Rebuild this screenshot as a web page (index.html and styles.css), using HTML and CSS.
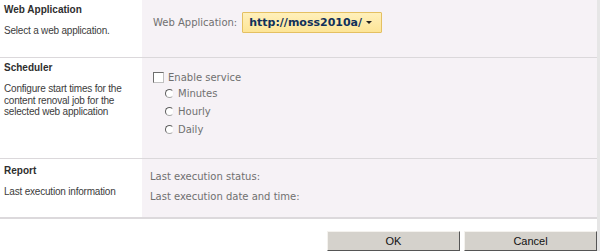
FILE: index.html
```html
<!DOCTYPE html>
<html lang="en">
<head>
    <title>Content Removal Settings</title>
    <link rel="stylesheet" href="styles.css">
</head>
<body>
<div class="page">

    <div class="section section-webapp">
        <div class="section-info">
            <div class="section-title">Web Application</div>
            <div class="section-desc">Select a web application.</div>
        </div>
        <div class="section-controls">
            <div class="webapp-row">
                <span class="field-label">Web Application:</span>
                <button class="webapp-picker">http://moss2010a/ <span class="picker-arrow"></span></button>
            </div>
        </div>
    </div>

    <div class="section section-scheduler">
        <div class="section-info">
            <div class="section-title">Scheduler</div>
            <div class="section-desc">Configure start times for the content renoval job for the selected web application</div>
        </div>
        <div class="section-controls">
            <label class="check-row"><span class="checkbox"></span>Enable service</label>
            <label class="radio-row"><span class="radio"></span>Minutes</label>
            <label class="radio-row"><span class="radio"></span>Hourly</label>
            <label class="radio-row"><span class="radio"></span>Daily</label>
        </div>
    </div>

    <div class="section section-report">
        <div class="section-info">
            <div class="section-title">Report</div>
            <div class="section-desc">Last execution information</div>
        </div>
        <div class="section-controls">
            <div class="report-row">Last execution status:</div>
            <div class="report-row">Last execution date and time:</div>
        </div>
    </div>

    <div class="buttons">
        <button class="dialog-button">OK</button>
        <button class="dialog-button">Cancel</button>
    </div>

</div>
</body>
</html>
```

FILE: styles.css
```css
body {
    margin: 0;
    background-color: white;
    font-family: "Liberation Sans", Arial, sans-serif;
}

.page {
    width: 597px;
    height: 251px;
    border-right: 3px solid #e6e6e6;
    overflow: hidden;
}

.section {
    display: grid;
    grid-template-columns: 142px 1fr;
    border-bottom: 1px solid #dbd8db;
}

.section-webapp {
    height: 57px;
}

.section-scheduler {
    height: 100px;
}

.section-report {
    height: 58px;
    border-bottom: 2px solid #dcd9dc;
}

.section-info {
    padding: 3px 4px 0 4px;
}

.section-report .section-info {
    padding-top: 5px;
}

.section-title {
    font-size: 10px;
    font-weight: bold;
    line-height: 14px;
    color: #2e2e2e;
}

.section-desc {
    font-size: 10px;
    line-height: 11.5px;
    margin-top: 8px;
    color: #3c3c3c;
    letter-spacing: -0.2px;
}

.section-controls {
    background-color: #f6f2f6;
    font-family: "DejaVu Sans", Verdana, sans-serif;
    font-size: 10px;
    color: #707070;
    padding-left: 11px;
}

/* web application picker */
.webapp-row {
    display: flex;
    align-items: center;
    padding-top: 12px;
}

.field-label {
    margin-right: 5px;
}

.webapp-picker {
    height: 21px;
    padding: 0 9px 0 6px;
    border: 1px solid #e4c062;
    border-radius: 1px;
    background: linear-gradient(#fff0bb, #fde597);
    font-family: "DejaVu Sans", Verdana, sans-serif;
    font-size: 11px;
    font-weight: bold;
    color: #10305a;
    display: flex;
    align-items: center;
}

.picker-arrow {
    width: 0;
    height: 0;
    margin-left: 4px;
    border-left: 3px solid transparent;
    border-right: 3px solid transparent;
    border-top: 3px solid #222;
}

/* scheduler options */
.section-scheduler .section-controls {
    padding-top: 12px;
}

.check-row {
    display: flex;
    align-items: center;
    height: 14px;
}

.checkbox {
    width: 9px;
    height: 9px;
    border: 1px solid #6e6e6e;
    border-right-color: #c0c0c0;
    border-bottom-color: #c0c0c0;
    background-color: white;
    margin-right: 4px;
}

.radio-row {
    display: flex;
    align-items: center;
    height: 18px;
    padding-left: 12px;
}

.radio {
    width: 7px;
    height: 7px;
    border: 1.5px solid #f2eef2;
    border-top-color: #5e5e5e;
    border-left-color: #5e5e5e;
    border-bottom-color: #a8a8a8;
    border-radius: 50%;
    background-color: white;
    margin-right: 4px;
}

/* report */
.section-report .section-controls {
    padding-top: 8px;
    padding-left: 8px;
}

.report-row {
    line-height: 20px;
}

/* dialog buttons */
.buttons {
    display: flex;
    justify-content: flex-end;
    gap: 4px;
    padding-top: 12px;
}

.dialog-button {
    width: 133px;
    height: 20px;
    background-color: #d5d2cc;
    border: 1px solid #f4f2ee;
    border-right-color: #555;
    border-bottom-color: #555;
    font-family: "Liberation Sans", Tahoma, sans-serif;
    font-size: 11px;
    color: #111;
    padding: 0;
}
```
